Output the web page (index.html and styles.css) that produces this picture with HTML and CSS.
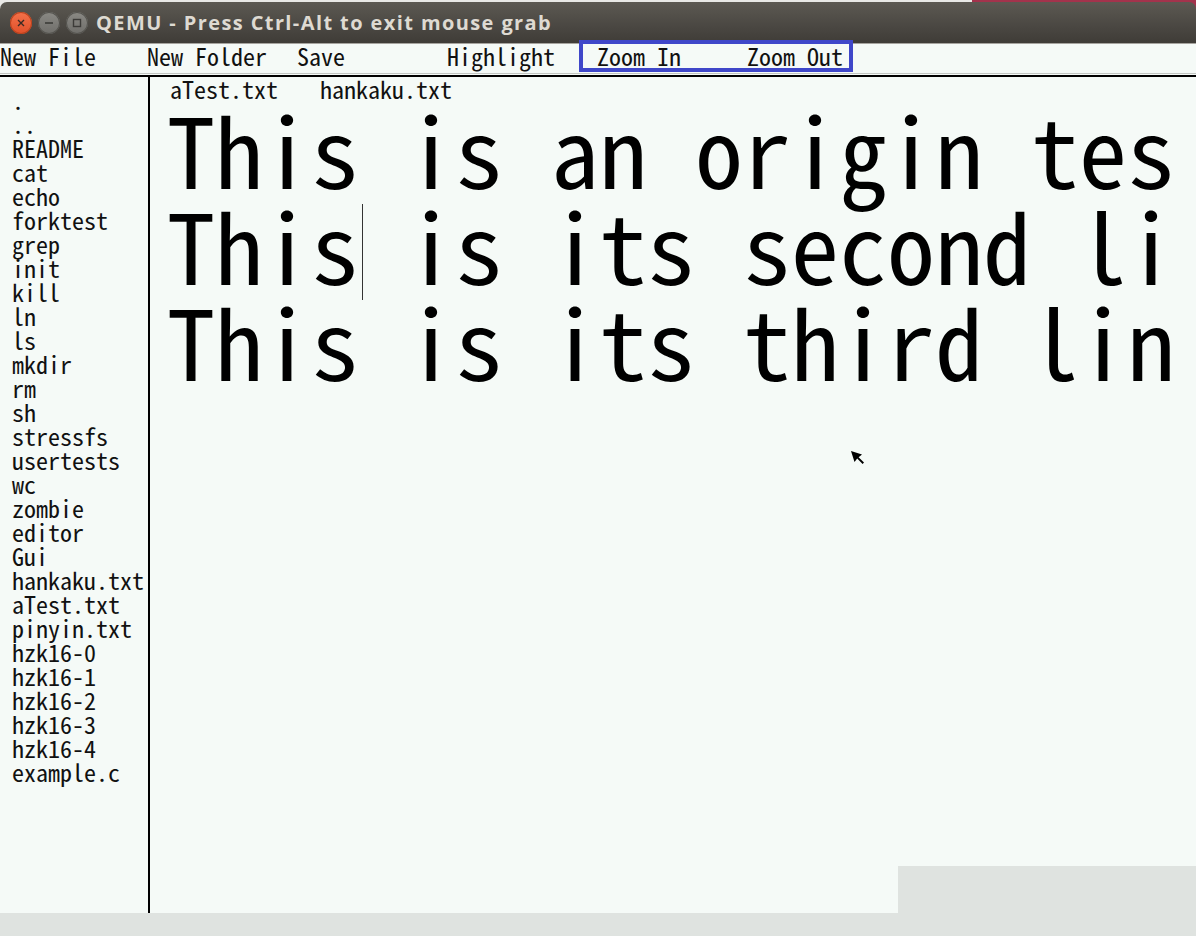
FILE: index.html
```html
<!DOCTYPE html>
<html>
<head>
<meta charset="utf-8">
<link rel="stylesheet" href="styles.css">
</head>
<body>
<div class="screen">
  <div class="frame">
    <div class="titlebar">
      <span class="wbtn close"><svg width="8" height="8" viewBox="0 0 8 8"><path d="M1 1L7 7M7 1L1 7" stroke="#3a2a24" stroke-width="1.4"/></svg></span>
      <span class="wbtn"><svg width="10" height="10" viewBox="0 0 10 10"><path d="M1 5H9" stroke="#3c3b38" stroke-width="1.6"/></svg></span>
      <span class="wbtn"><svg width="10" height="10" viewBox="0 0 10 10"><rect x="1.5" y="1.5" width="7" height="7" fill="none" stroke="#3c3b38" stroke-width="1.4"/></svg></span>
      <span class="title">QEMU - Press Ctrl-Alt to exit mouse grab</span>
    </div>
  </div>
  <div class="menubar mono">
    <span class="menu-item first">New File</span>
    <span class="menu-item">New Folder</span>
    <span class="menu-item">Save</span>
    <span class="menu-item">Highlight</span>
    <span class="menu-item">Zoom In</span>
    <span class="menu-item">Zoom Out</span>
    <div class="zoom-box"></div>
  </div>
  <div class="rule"></div>
  <div class="main">
    <div class="sidebar mono">
      <div class="file">.</div>
      <div class="file">..</div>
      <div class="file">README</div>
      <div class="file">cat</div>
      <div class="file">echo</div>
      <div class="file">forktest</div>
      <div class="file">grep</div>
      <div class="file">init</div>
      <div class="file">kill</div>
      <div class="file">ln</div>
      <div class="file">ls</div>
      <div class="file">mkdir</div>
      <div class="file">rm</div>
      <div class="file">sh</div>
      <div class="file">stressfs</div>
      <div class="file">usertests</div>
      <div class="file">wc</div>
      <div class="file">zombie</div>
      <div class="file">editor</div>
      <div class="file">Gui</div>
      <div class="file">hankaku.txt</div>
      <div class="file">aTest.txt</div>
      <div class="file">pinyin.txt</div>
      <div class="file">hzk16-0</div>
      <div class="file">hzk16-1</div>
      <div class="file">hzk16-2</div>
      <div class="file">hzk16-3</div>
      <div class="file">hzk16-4</div>
      <div class="file">example.c</div>
    </div>
    <div class="editor">
      <div class="tabs mono">
        <span class="tab">aTest.txt</span>
        <span class="tab">hankaku.txt</span>
      </div>
      <div class="doc mono">
        <div class="line">This is an origin tes</div>
        <div class="line">This is its second li</div>
        <div class="line">This is its third lin</div>
      </div>
      <div class="caret"></div>
      <svg class="pointer" width="14" height="14" viewBox="0 0 14 14"><path d="M0 0L11 3.5L7.6 6.2L13 11.6L11.6 13L6.2 7.6L3.5 11Z" fill="#000"/></svg>
      <div class="corner-block"></div>
    </div>
  </div>
  <div class="footer"></div>
</div>
</body>
</html>
```
FILE: styles.css
```css
html, body {
  margin: 0;
  padding: 0;
}
body {
  width: 1196px;
  height: 936px;
  overflow: hidden;
  background: #dfe3e0;
}
.screen {
  width: 1196px;
  height: 936px;
  display: flex;
  flex-direction: column;
  background: #f5faf7;
}
.mono {
  font-family: "Noto Sans Mono CJK SC", "Noto Sans Mono CJK JP", "Liberation Mono", monospace;
  color: #111;
}
.frame {
  padding-top: 2px;
  background: linear-gradient(to right, #e9e9e6 0, #e9e9e6 972px, #a3334c 972px, #a3334c 100%);
}
.titlebar {
  height: 41px;
  border-radius: 7px 7px 0 0;
  background: linear-gradient(to bottom, #5c5952 0%, #4a4742 60%, #3f3c37 100%);
  border-bottom: 1px solid #a6a49f;
  display: flex;
  align-items: center;
  padding-left: 10px;
  gap: 6px;
}
.wbtn {
  width: 22px;
  height: 22px;
  border-radius: 50%;
  background: linear-gradient(to bottom, #8a8984, #6f6e6a);
  box-shadow: inset 0 0 0 1px #55544f;
  display: flex;
  align-items: center;
  justify-content: center;
}
.wbtn.close {
  background: linear-gradient(to bottom, #f4714a, #e0502a);
  box-shadow: inset 0 0 0 1px #b8431f;
}
.title {
  margin-left: 2px;
  font-family: "Open Sans", "DejaVu Sans", sans-serif;
  font-weight: 700;
  font-size: 20px;
  letter-spacing: 1.4px;
  color: #dedad2;
  white-space: nowrap;
}
.menubar {
  position: relative;
  height: 29px;
  border-bottom: 1px solid #c2c6c3;
  display: flex;
  font-size: 24px;
  line-height: 24px;
}
.menu-item {
  width: 150px;
  flex: none;
  white-space: nowrap;
}
.menu-item.first {
  width: 147px;
}
.zoom-box {
  position: absolute;
  left: 579px;
  top: -4px;
  width: 274px;
  height: 32px;
  box-sizing: border-box;
  border: 4px solid #3f47c9;
}
.rule {
  height: 2px;
  margin-top: 1px;
  background: #000;
}
.main {
  flex: none;
  height: 836px;
  display: flex;
}
.sidebar {
  width: 136px;
  flex: none;
  border-right: 2px solid #000;
  padding: 11px 0 0 12px;
  font-size: 24px;
  line-height: 24px;
  white-space: nowrap;
}
.editor {
  position: relative;
  flex: 1;
  padding-left: 17px;
}
.tabs {
  display: flex;
  padding-left: 3px;
  font-size: 24px;
  line-height: 24px;
}
.tab {
  width: 150px;
  flex: none;
  white-space: nowrap;
}
.doc {
  margin-top: -1px;
  font-size: 96px;
  line-height: 96px;
  color: #000;
}
.line {
  white-space: nowrap;
}
.caret {
  position: absolute;
  left: 212px;
  top: 127px;
  width: 1px;
  height: 96px;
  background: #333;
}
.pointer {
  position: absolute;
  left: 701px;
  top: 374px;
}
.corner-block {
  position: absolute;
  right: 0;
  bottom: 0;
  width: 298px;
  height: 47px;
  background: #dfe3e0;
}
.footer {
  flex: 1;
  background: #dfe3e0;
}
```
